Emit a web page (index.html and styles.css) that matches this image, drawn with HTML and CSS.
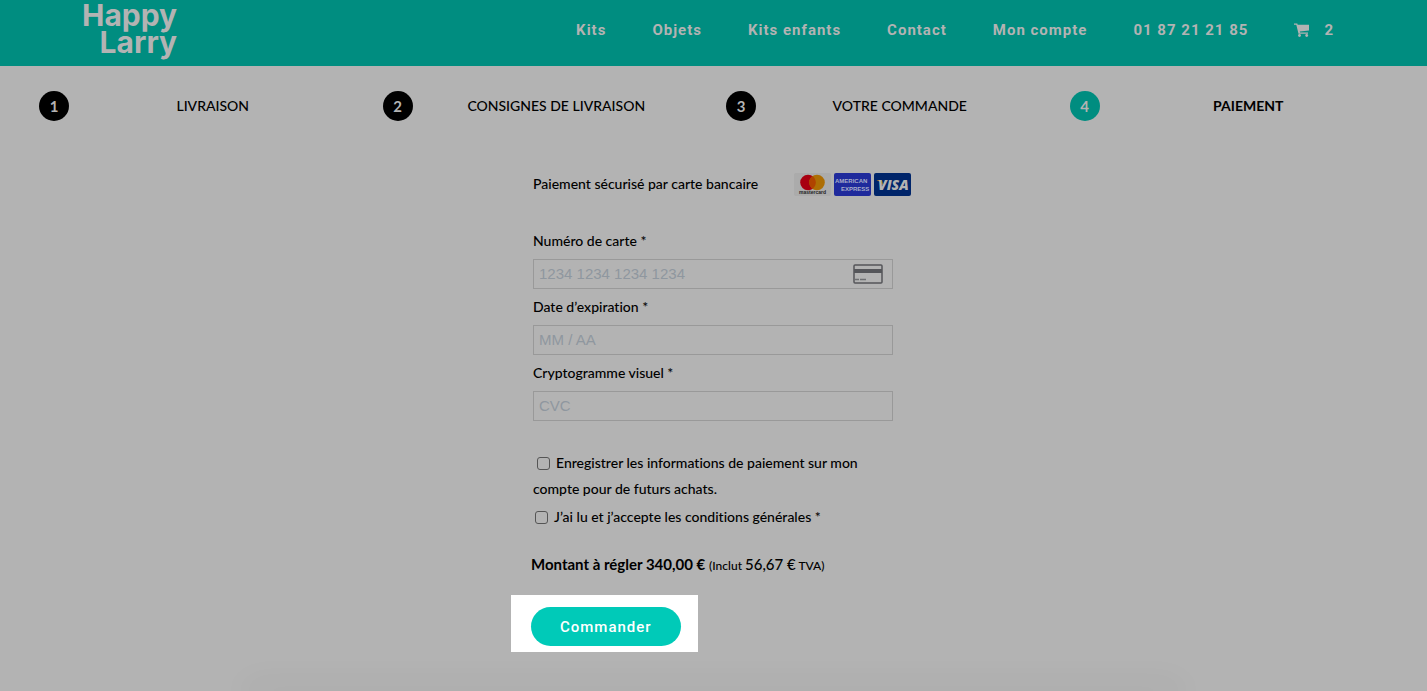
FILE: index.html
```html
<!DOCTYPE html>
<html lang="fr">
<head>
<meta charset="utf-8">
<meta name="viewport" content="width=device-width, initial-scale=1">
<title>Happy Larry – Paiement</title>
<link rel="stylesheet" href="styles.css">
</head>
<body>
<header class="header">
  <a class="logo" href="#">Happy<br>Larry</a>
  <nav class="nav">
    <a href="#">Kits</a>
    <a href="#">Objets</a>
    <a href="#">Kits enfants</a>
    <a href="#">Contact</a>
    <a href="#">Mon compte</a>
    <a href="#">01 87 21 21 85</a>
    <a class="cart" href="#" aria-label="Panier, 2 articles">
      <svg width="16" height="14" viewBox="0 0 16 14" aria-hidden="true"><path d="M0 .5h3.300l.4 1.300H15v5.600l-9.200 1.100.2 1H14v1.300H4.500L2.300 1.800H0z"/><circle cx="5.500" cy="12.500" r="1.400"/><circle cx="12.700" cy="12.500" r="1.400"/></svg>
      <span>2</span>
    </a>
  </nav>
</header>

<main class="main">
  <ol class="steps">
    <li class="step"><span class="step-number">1</span><span class="step-label">LIVRAISON</span></li>
    <li class="step"><span class="step-number">2</span><span class="step-label">CONSIGNES DE LIVRAISON</span></li>
    <li class="step"><span class="step-number">3</span><span class="step-label">VOTRE COMMANDE</span></li>
    <li class="step step-current" aria-current="step"><span class="step-number">4</span><span class="step-label">PAIEMENT</span></li>
  </ol>

  <form class="checkout">
    <div class="method">
      <span>Paiement sécurisé par carte bancaire</span>
      <span class="brands">
        <svg width="37" height="23" viewBox="0 0 37 23" role="img" aria-label="Mastercard"><rect width="37" height="23" rx="2" fill="#ababab"/><circle cx="14" cy="9.500" r="7.800" fill="#a80011"/><circle cx="23" cy="9.500" r="7.800" fill="#ad6e04"/><path d="M18.500 3.100a7.800 7.800 0 0 1 0 12.800a7.800 7.800 0 0 1 0-12.800z" fill="#b04300"/><text x="18.500" y="21" text-anchor="middle" class="brand-mc">mastercard</text></svg>
        <svg width="37" height="23" viewBox="0 0 37 23" role="img" aria-label="American Express"><rect width="37" height="23" rx="2" fill="#1f2a9c"/><text x="1" y="10" class="brand-amex">AMERICAN</text><text x="7" y="18" class="brand-amex">EXPRESS</text></svg>
        <svg width="37" height="23" viewBox="0 0 37 23" role="img" aria-label="Visa"><rect width="37" height="23" rx="2" fill="#00256a"/><path d="M2.500 7h4.200q1.300 0 1.500 1.200l1 4.200Q7 8.600 2.500 7z" fill="#ad7a12"/><text x="4" y="17" class="brand-visa">VISA</text></svg>
      </span>
    </div>

    <div class="field">
      <label for="card">Numéro de carte *</label>
      <div class="input-box">
        <input id="card" type="text" inputmode="numeric" placeholder="1234 1234 1234 1234">
        <svg width="30" height="20" viewBox="0 0 30 20" aria-hidden="true"><rect x="1" y="1" width="28" height="18" rx="1" fill="none" stroke="#55565a" stroke-width="1.500"/><path d="M1 5h28v4H1z" fill="#55565a"/><path d="M2 15.500h4M7 15.500h6" stroke="#6e6f72" stroke-width="1.500"/></svg>
      </div>
    </div>
    <div class="field">
      <label for="expiry">Date d’expiration *</label>
      <div class="input-box"><input id="expiry" type="text" placeholder="MM / AA"></div>
    </div>
    <div class="field">
      <label for="cvc">Cryptogramme visuel *</label>
      <div class="input-box"><input id="cvc" type="text" placeholder="CVC"></div>
    </div>

    <div class="consents">
      <div class="consent save-card"><input id="save" type="checkbox"><label for="save">Enregistrer les informations de paiement sur mon compte pour de futurs achats.</label></div>
      <div class="consent terms"><input id="terms" type="checkbox"><label for="terms">J’ai lu et j’accepte les conditions générales *</label></div>
    </div>

    <p class="total"><strong>Montant à régler 340,00 €</strong> <small>(Inclut <span>56,67 €</span> TVA)</small></p>

    <div class="spotlight"><button class="submit" type="submit">Commander</button></div>
  </form>
</main>
<div class="edge"></div>
</body>
</html>
```

FILE: styles.css
```css
:root {
  --ground: #b3b3b3;
  --teal: #008d80;
  --teal-bright: #00cab8;
}

* { box-sizing: border-box; }

body {
  margin: 0;
  min-height: 100vh;
  display: flex;
  flex-direction: column;
  overflow-x: hidden;
  background: var(--ground);
  color: #000;
  font-family: Lato, "Open Sans", sans-serif;
  font-size: 14px;
  font-weight: 500;
  font-variant-ligatures: none;
  line-height: 26px;
}

.header {
  display: flex;
  justify-content: space-between;
  height: 66px;
  padding: 0 93px 0 82px;
  background: var(--teal);
}

.header a {
  color: var(--ground);
  text-decoration: none;
}

.logo {
  padding-top: 2px;
  font-family: Inter, sans-serif;
  font-size: 30px;
  font-weight: 700;
  line-height: 27px;
  text-align: right;
}

.nav {
  display: flex;
  align-items: center;
  gap: 46px;
  padding-bottom: 6px;
  font-family: Roboto, sans-serif;
  font-size: 15px;
  font-weight: 700;
  letter-spacing: 1px;
}

.cart {
  display: flex;
  align-items: center;
  gap: 14px;
}

.cart svg { fill: currentColor; }

.main { flex: 1; }

.steps {
  display: grid;
  grid-template-columns: repeat(4, 1fr);
  margin: 0;
  padding: 25px 14px 0 39px;
  list-style: none;
}

.step {
  display: flex;
  align-items: center;
  padding-right: 26px;
}

.step-number {
  width: 30px;
  height: 30px;
  border-radius: 50%;
  background: #000;
  color: var(--ground);
  font-size: 15px;
  font-weight: 700;
  line-height: 30px;
  text-align: center;
}

.step-label {
  flex: 1;
  text-align: center;
}

.step-current {
  padding-right: 16px;
  font-weight: 700;
}

.step-current .step-number { background: var(--teal); }

.checkout {
  max-width: 405px;
  margin: 50px auto 0;
}

.method {
  display: flex;
  justify-content: space-between;
  align-items: center;
  margin-bottom: 26px;
  padding: 0 5px 0 22px;
}

.brands {
  display: flex;
  gap: 3px;
}

.brand-mc {
  font: 700 5px "Liberation Sans", sans-serif;
  fill: #222;
}

.brand-amex {
  font: 700 6px "Liberation Sans", sans-serif;
  fill: #a9adc9;
}

.brand-visa {
  font: italic 900 14px "Open Sans", sans-serif;
  fill: var(--ground);
}

.field { padding: 0 23px 0 22px; }

.field label {
  display: block;
  line-height: 36px;
}

.input-box {
  display: flex;
  align-items: center;
  height: 30px;
  padding: 0 9px 0 5px;
  border: 1px solid #999;
}

.input-box input {
  flex: 1;
  min-width: 0;
  padding: 0 0 2px;
  border: 0;
  outline: 0;
  background: transparent;
  font: 15px "Liberation Sans", Arial, sans-serif;
}

.input-box input::placeholder {
  color: #8f979f;
  opacity: 1;
}

.consents {
  display: grid;
  gap: 2px;
  margin-top: 29px;
  padding: 0 30px 0 22px;
}

.consent input {
  appearance: none;
  width: 13px;
  height: 13px;
  margin: 0 6px 0 4px;
  border: 1px solid #555;
  border-radius: 3px;
  vertical-align: -2px;
}

.terms input { margin-left: 2px; }

.total {
  margin: 21px 0 18px;
  padding-left: 20px;
  font-size: 15px;
}

.total small {
  font-size: 12px;
  line-height: 1;
}

.total span { font-size: 15px; }

.spotlight {
  width: fit-content;
  padding: 12px 17px 6px 20px;
  background: #fff;
}

.submit {
  display: block;
  height: 39px;
  padding: 0 29px;
  border: 0;
  border-radius: 20px;
  background: var(--teal-bright);
  color: #fff;
  font: 500 15px Roboto, sans-serif;
  letter-spacing: 1px;
}

.edge {
  margin: 0 250px;
  box-shadow: 0 0 32px 4px rgba(0, 0, 0, 0.1);
}
```
